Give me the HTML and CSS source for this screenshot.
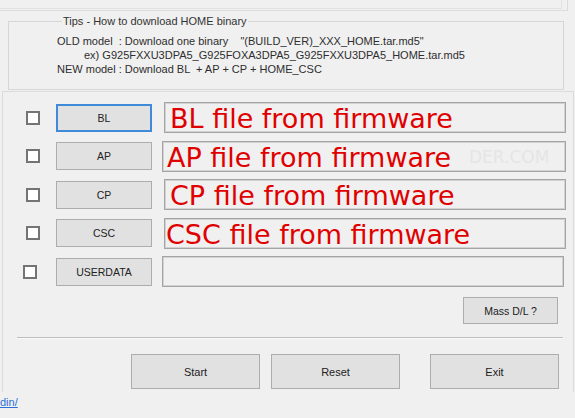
FILE: index.html
```html
<!DOCTYPE html>
<html>
<head>
<meta charset="utf-8">
<link rel="stylesheet" href="styles.css">
</head>
<body>
<div class="top"><div class="top-inner"></div></div>
<fieldset class="tips">
  <legend>Tips - How to download HOME binary</legend>
  <div class="tip-line">OLD model  : Download one binary    "(BUILD_VER)_XXX_HOME.tar.md5"</div>
  <div class="tip-line tip-ex">ex) G925FXXU3DPA5_G925FOXA3DPA5_G925FXXU3DPA5_HOME.tar.md5</div>
  <div class="tip-line">NEW model : Download BL  + AP + CP + HOME_CSC</div>
</fieldset>
<div class="panel">
  <div class="rows">
    <div class="row">
      <span class="check"></span>
      <button class="btn btn-file btn-focus">BL</button>
      <div class="field pad-bl">BL file from firmware</div>
    </div>
    <div class="row">
      <span class="check"></span>
      <button class="btn btn-file">AP</button>
      <div class="field pad-ap"><span class="fname">AP file from firmware</span><span class="watermark">DER.COM</span></div>
    </div>
    <div class="row">
      <span class="check"></span>
      <button class="btn btn-file">CP</button>
      <div class="field pad-cp">CP file from firmware</div>
    </div>
    <div class="row">
      <span class="check"></span>
      <button class="btn btn-file">CSC</button>
      <div class="field pad-csc">CSC file from firmware</div>
    </div>
    <div class="row row-ud">
      <span class="check"></span>
      <button class="btn btn-file">USERDATA</button>
      <div class="field"></div>
    </div>
  </div>
  <div class="mass-wrap"><button class="btn btn-mass">Mass D/L ?</button></div>
  <div class="sep"></div>
  <div class="actions">
    <button class="btn btn-act">Start</button>
    <button class="btn btn-act">Reset</button>
    <button class="btn btn-act btn-exit">Exit</button>
  </div>
</div>
<a class="link" href="#">din/</a>
</body>
</html>
```
FILE: styles.css
```css
html, body {
  margin: 0;
  padding: 0;
  background: #f0f0f0;
  width: 575px;
  height: 418px;
  overflow: hidden;
  font-family: "Liberation Sans", Arial, sans-serif;
  color: #2b2b2b;
}
.top {
  height: 11px;
  width: 568px;
  border-right: 1px solid #dcdcdc;
  border-bottom: 1px solid #dcdcdc;
  box-sizing: border-box;
}
.top-inner {
  height: 9px;
  width: 562px;
  border-right: 1px solid #e2e2e2;
  border-bottom: 1px solid #e2e2e2;
  box-sizing: border-box;
}
.tips {
  margin: 4px 11px 0 8px;
  padding: 6px 0 13px 48px;
  border: 1px solid #d6d6d6;
  min-width: 0;
}
.tips legend {
  margin-left: 5px;
  padding: 0 1px;
  font-size: 11px;
  line-height: 13px;
  color: #333;
}
.tip-line {
  font-size: 11px;
  line-height: 14px;
  white-space: pre;
  color: #2e2e2e;
}
.tip-ex {
  margin-left: 27px;
}
.panel {
  margin: 1px 1px 0 2px;
  border: 1px solid #dcdcdc;
  border-bottom: none;
  padding: 10px 6px 3px 0;
}
.rows {
  display: flex;
  flex-direction: column;
  gap: 7.5px;
}
.row {
  display: flex;
  align-items: center;
  height: 31px;
}
.check {
  width: 14px;
  height: 14px;
  box-sizing: border-box;
  border: 2px solid #747474;
  background: #fff;
  margin-left: 23px;
  margin-right: 16px;
  flex: none;
}
.row-ud .check {
  margin-left: 20px;
  margin-right: 19px;
}
.btn {
  font-family: "Liberation Sans", Arial, sans-serif;
  font-size: 10.5px;
  color: #222;
  background: #e1e1e1;
  border: 1px solid #adadad;
  box-sizing: border-box;
  padding: 0;
  margin: 0;
}
.btn-file {
  width: 96px;
  height: 28px;
  flex: none;
}
.btn-focus {
  border: 2px solid #3f8ad9;
}
.field {
  position: relative;
  margin-left: 12px;
  width: 402px;
  height: 31px;
  box-sizing: border-box;
  border: 1px solid #a4a4a4;
  box-shadow: inset 0 0 0 1px #d2d2d2;
  background: #f0f0f0;
  font-family: "DejaVu Sans", Verdana, sans-serif;
  font-size: 27px;
  line-height: 29px;
  color: #e00000;
  white-space: nowrap;
  overflow: hidden;
  padding-top: 1px;
  padding-left: 5px;
}
.pad-ap { padding-left: 4px; margin-left: 10px; width: 404px; }
.pad-cp { padding-left: 5px; }
.pad-csc { padding-left: 1px; }
.row-ud .field { margin-left: 10px; width: 402px; }
.watermark {
  position: absolute;
  left: 306px;
  top: 4px;
  font-size: 17px;
  line-height: 22px;
  color: #e5e5e5;
}
.mass-wrap {
  display: flex;
  justify-content: flex-end;
  margin-top: 10px;
  padding-right: 9px;
}
.btn-mass {
  width: 95px;
  height: 27px;
}
.sep {
  margin: 13px 4px 0 14px;
  border-top: 1px solid #bdbdbd;
  border-bottom: 1px solid #fafafa;
}
.actions {
  display: flex;
  margin-top: 15px;
  padding-left: 128px;
  gap: 11px;
}
.btn-act {
  width: 129px;
  height: 35px;
  font-size: 11px;
}
.btn-exit {
  margin-left: 19px;
}
.link {
  display: block;
  margin-top: 3px;
  font-size: 11px;
  line-height: 14px;
  color: #2a6fd6;
  text-decoration: underline;
}
```
